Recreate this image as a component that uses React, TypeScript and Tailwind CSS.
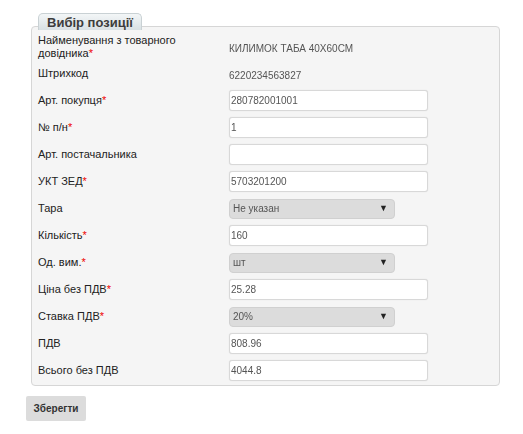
import React from 'react'

type Row = {
  label: string
  required?: boolean
  kind: 'text' | 'input' | 'select'
  value: string
  twoLine?: boolean
}

const rows: Row[] = [
  { label: 'Найменування з товарного довідника', required: true, kind: 'text', value: 'КИЛИМОК ТАБА 40X60CM', twoLine: true },
  { label: 'Штрихкод', kind: 'text', value: '6220234563827' },
  { label: 'Арт. покупця', required: true, kind: 'input', value: '280782001001' },
  { label: '№ п/н', required: true, kind: 'input', value: '1' },
  { label: 'Арт. постачальника', kind: 'input', value: '' },
  { label: 'УКТ ЗЕД', required: true, kind: 'input', value: '5703201200' },
  { label: 'Тара', kind: 'select', value: 'Не указан' },
  { label: 'Кількість', required: true, kind: 'input', value: '160' },
  { label: 'Од. вим.', required: true, kind: 'select', value: 'шт' },
  { label: 'Ціна без ПДВ', required: true, kind: 'input', value: '25.28' },
  { label: 'Ставка ПДВ', required: true, kind: 'select', value: '20%' },
  { label: 'ПДВ', kind: 'input', value: '808.96' },
  { label: 'Всього без ПДВ', kind: 'input', value: '4044.8' },
]

function Value({ row }: { row: Row }) {
  if (row.kind === 'text') {
    return <span className="text-[10px] text-[#555]">{row.value}</span>
  }
  if (row.kind === 'select') {
    return (
      <div className="flex h-[20px] w-[166px] items-center justify-between rounded-[4px] border border-[#d0d0d0] bg-[#dcdcdc] pl-[3px] pr-[6px] text-[10px] text-[#555]">
        <span>{row.value}</span>
        <span className="text-[9px] text-[#222]">▼</span>
      </div>
    )
  }
  return (
    <div className="flex h-[21px] w-[199px] items-center rounded-[3px] border border-[#d8d8d8] bg-white pl-[1px] text-[10px] text-[#555] shadow-[0_0_1px_rgba(0,0,0,0.15)]">
      {row.value}
    </div>
  )
}

export default function App() {
  return (
    <div className="min-h-[434px] w-[523px] bg-white pl-[26px] pt-[13px] font-['Liberation_Sans',Arial,sans-serif]">
      <div className="relative z-10 mb-[-4px] ml-[12px] flex h-[17px] w-[104px] items-center justify-center rounded-t-[5px] border border-b-0 border-[#c9d1d4] bg-gradient-to-b from-[#f3f6f7] to-[#d8e0e3] text-[13px] font-bold leading-none text-[#3c3c3c]">
        Вибір позиції
      </div>
      <div className="ml-[5px] w-[469px] rounded-[4px] border border-[#d6d6d6] bg-[#f5f5f5] pb-px pl-[6px] pt-[6px]">
        {rows.map((row) => (
          <div key={row.label} className="flex h-[27px] items-center">
            <div className="w-[191px] text-[11px] leading-[13px] text-[#222]">
              {row.twoLine ? (
                <span className="block w-[150px]">
                  {row.label}
                  {row.required && <span className="text-[#e00]">*</span>}
                </span>
              ) : (
                <>
                  {row.label}
                  {row.required && <span className="text-[#e00]">*</span>}
                </>
              )}
            </div>
            <div className="blur-[0.6px]">
              <Value row={row} />
            </div>
          </div>
        ))}
      </div>
      <button className="mt-[10px] h-[25px] w-[60px] rounded-[2px] bg-[#dcdcdc] text-[10px] font-bold text-[#333]">
        Зберегти
      </button>
    </div>
  )
}
